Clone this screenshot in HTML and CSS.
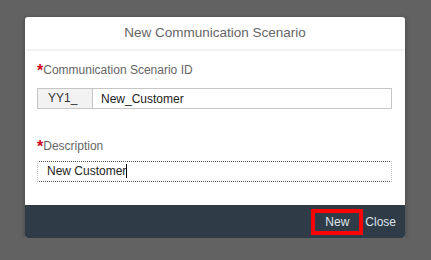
FILE: index.html
```html
<!DOCTYPE html>
<html lang="en">
<head>
    <meta charset="UTF-8">
    <title>New Communication Scenario</title>
    <link rel="stylesheet" href="styles.css">
</head>
<body>
<div class="dialog">
    <div class="dialog-header">New Communication Scenario</div>
    <div class="dialog-content">
        <label class="field-label"><span class="required">*</span>Communication Scenario ID</label>
        <div class="id-row">
            <div class="prefix">YY1_</div>
            <input type="text" class="text-input id-input" value="New_Customer">
        </div>
        <label class="field-label second"><span class="required">*</span>Description</label>
        <div class="text-input focused">New Customer<span class="caret"></span></div>
    </div>
    <div class="dialog-footer">
        <button class="footer-btn btn-new">New</button>
        <button class="footer-btn btn-close">Close</button>
    </div>
</div>
</body>
</html>
```

FILE: styles.css
```css
*{
    box-sizing: border-box;
}
body{
    margin: 0;
    padding-top: 17px;
    background: #626262;
    font-family: "Liberation Sans", Arial, sans-serif;
}
.dialog{
    width: 380px;
    height: 221px;
    margin-left: 25px;
    background: #fff;
    border-radius: 3px;
    box-shadow: 0 1px 4px rgba(0,0,0,0.35);
    display: flex;
    flex-direction: column;
    overflow: hidden;
}
.dialog-header{
    height: 34px;
    margin: 0 1px;
    border-bottom: 2px solid #f2f2f2;
    text-align: center;
    font-size: 13.5px;
    line-height: 32px;
    color: #666;
}
.dialog-content{
    flex: 1;
    padding: 11px 13px 0 12px;
}
.field-label{
    display: block;
    height: 16px;
    font-size: 12px;
    line-height: 16px;
    color: #666;
    margin-bottom: 10px;
}
.field-label.second{
    margin-top: 29px;
    margin-bottom: 7px;
}
.required{
    color: #d0021b;
    font-size: 16px;
    font-weight: bold;
    vertical-align: -2px;
}
.id-row{
    display: flex;
}
.prefix{
    width: 55px;
    height: 21px;
    border: 1px solid #c6c6c6;
    border-right: none;
    background: #f2f2f2;
    font-size: 12px;
    line-height: 19px;
    padding-left: 10px;
    color: #333;
}
.text-input{
    height: 21px;
    border: 1px solid #c6c6c6;
    font-family: "Liberation Sans", Arial, sans-serif;
    font-size: 12px;
    line-height: 19px;
    color: #222;
    padding: 0 8px;
    background: #fff;
}
.id-input{
    flex: 1;
    outline: none;
}
.focused{
    border: 1px dotted #555;
    border-left-color: #c6c6c6;
    border-right-color: #c6c6c6;
    padding-left: 9px;
}
.caret{
    display: inline-block;
    width: 1px;
    height: 14px;
    background: #000;
    vertical-align: -3px;
}
.dialog-footer{
    height: 33px;
    background: #2f3b47;
    display: flex;
    justify-content: flex-end;
    align-items: center;
    padding-right: 9px;
}
.footer-btn{
    background: none;
    border: none;
    font-family: "Liberation Sans", Arial, sans-serif;
    font-size: 12px;
    color: #dde3ea;
    padding: 0;
    cursor: pointer;
}
.btn-new{
    width: 52px;
    height: 26px;
    border: 4px solid #f00;
    margin-right: 2px;
}
```
